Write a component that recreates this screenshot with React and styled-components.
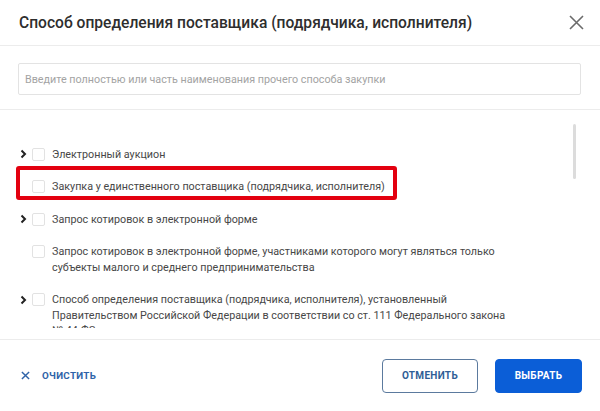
import styled, { createGlobalStyle } from "styled-components";

const GlobalStyle = createGlobalStyle`
  html, body {
    margin: 0;
    padding: 0;
    background: #fff;
  }
  body {
    font-family: Roboto, "Liberation Sans", sans-serif;
    color: #333;
  }
`;

const Dialog = styled.div`
  width: 600px;
  height: 411px;
  display: flex;
  flex-direction: column;
  background: #fff;
  overflow: hidden;
`;

const Header = styled.header`
  height: 46px;
  display: flex;
  align-items: center;
  justify-content: space-between;
  padding: 0 16px 0 19px;
  border-bottom: 1px solid #ececec;
  box-sizing: border-box;
`;

const Title = styled.h2`
  margin: 0;
  font-size: 15.6px;
  font-weight: 500;
  color: #2e2e2e;
`;

const CloseButton = styled.button`
  border: 0;
  background: none;
  padding: 0;
  width: 16px;
  height: 16px;
  display: flex;
  align-items: center;
  justify-content: center;
  cursor: pointer;
`;

const SearchBar = styled.div`
  height: 64px;
  padding: 17px 19px 0 18px;
  box-sizing: border-box;
  border-bottom: 1px solid #ececec;
`;

const SearchInput = styled.input`
  width: 100%;
  height: 32px;
  box-sizing: border-box;
  border: 1px solid #e3e3e3;
  border-radius: 2px;
  padding: 0 6px;
  font-family: Roboto, "Liberation Sans", sans-serif;
  font-size: 10.75px;
  color: #333;
  outline: none;
  &::placeholder {
    color: #a3a3a3;
  }
`;

const ListArea = styled.div`
  position: relative;
  height: 218px;
  margin-bottom: 11px;
  overflow: hidden;
  padding: 28px 0 0 20px;
  box-sizing: border-box;
`;

const ScrollThumb = styled.div`
  position: absolute;
  right: 24px;
  top: 14px;
  width: 3px;
  height: 55px;
  border-radius: 2px;
  background: #dcdcdc;
`;

const Row = styled.div`
  position: relative;
  display: flex;
  align-items: flex-start;
  padding: 8.5px 0;
`;

const Toggle = styled.span`
  width: 12px;
  height: 15.5px;
  flex: none;
  display: flex;
  align-items: center;
`;

const Checkbox = styled.span`
  width: 13px;
  height: 13px;
  flex: none;
  margin-top: 1px;
  margin-right: 7px;
  box-sizing: border-box;
  border: 1px solid #e2e2e2;
  border-radius: 2px;
`;

const Label = styled.span`
  font-size: 10.75px;
  line-height: 15.5px;
  color: #474747;
  max-width: 455px;
`;

const Highlight = styled.div`
  position: absolute;
  left: -4px;
  top: -4.5px;
  width: 381px;
  height: 34px;
  box-sizing: border-box;
  border: 4px solid #e3000f;
  border-radius: 3px;
  pointer-events: none;
`;

const Footer = styled.footer`
  flex: 1;
  border-top: 1px solid #ececec;
  display: flex;
  align-items: center;
  justify-content: space-between;
  padding: 0 18px 0 21px;
`;

const ClearButton = styled.button`
  border: 0;
  background: none;
  padding: 0;
  display: flex;
  align-items: center;
  gap: 12px;
  font-family: Roboto, "Liberation Sans", sans-serif;
  font-size: 9.8px;
  font-weight: 700;
  letter-spacing: 0.3px;
  color: #2f63a8;
  cursor: pointer;
`;

const Actions = styled.div`
  display: flex;
  gap: 17px;
`;

const ActionButton = styled.button`
  height: 34px;
  padding: 0;
  width: ${({ $w }) => $w}px;
  border-radius: 4px;
  font-family: Roboto, "Liberation Sans", sans-serif;
  font-size: 10px;
  font-weight: 700;
  letter-spacing: 0.3px;
  cursor: pointer;
  border: 1px solid ${({ $primary }) => ($primary ? "#0b5ed7" : "#5b7a9e")};
  background: ${({ $primary }) => ($primary ? "#0b5ed7" : "#fff")};
  color: ${({ $primary }) => ($primary ? "#fff" : "#2f5e96")};
`;

const Chevron = () => (
  <svg width="7" height="10" viewBox="0 0 7 10">
    <path d="M1.5 1.5 L5 5 L1.5 8.5" fill="none" stroke="#222" strokeWidth="2" />
  </svg>
);

const items = [
  { text: "Электронный аукцион", nested: true },
  { text: "Закупка у единственного поставщика (подрядчика, исполнителя)", marked: true },
  { text: "Запрос котировок в электронной форме", nested: true },
  {
    text: "Запрос котировок в электронной форме, участниками которого могут являться только субъекты малого и среднего предпринимательства",
  },
  {
    text: "Способ определения поставщика (подрядчика, исполнителя), установленный Правительством Российской Федерации в соответствии со ст. 111 Федерального закона № 44-ФЗ",
    nested: true,
  },
];

const App = () => {
  return (
    <>
      <GlobalStyle />
      <Dialog>
        <Header>
          <Title>Способ определения поставщика (подрядчика, исполнителя)</Title>
          <CloseButton aria-label="Закрыть">
            <svg width="15" height="15" viewBox="0 0 15 15">
              <path d="M1 1 L14 14 M14 1 L1 14" stroke="#6b6b6b" strokeWidth="1.6" />
            </svg>
          </CloseButton>
        </Header>
        <SearchBar>
          <SearchInput placeholder="Введите полностью или часть наименования прочего способа закупки" />
        </SearchBar>
        <ListArea>
          <ScrollThumb />
          {items.map((item) => (
            <Row key={item.text}>
              {item.marked && <Highlight />}
              <Toggle>{item.nested && <Chevron />}</Toggle>
              <Checkbox />
              <Label>{item.text}</Label>
            </Row>
          ))}
        </ListArea>
        <Footer>
          <ClearButton>
            <svg width="9" height="9" viewBox="0 0 10 10">
              <path d="M1 1 L9 9 M9 1 L1 9" stroke="#2f63a8" strokeWidth="1.6" />
            </svg>
            ОЧИСТИТЬ
          </ClearButton>
          <Actions>
            <ActionButton $w={96}>ОТМЕНИТЬ</ActionButton>
            <ActionButton $w={87} $primary>
              ВЫБРАТЬ
            </ActionButton>
          </Actions>
        </Footer>
      </Dialog>
    </>
  );
};

export default App;
